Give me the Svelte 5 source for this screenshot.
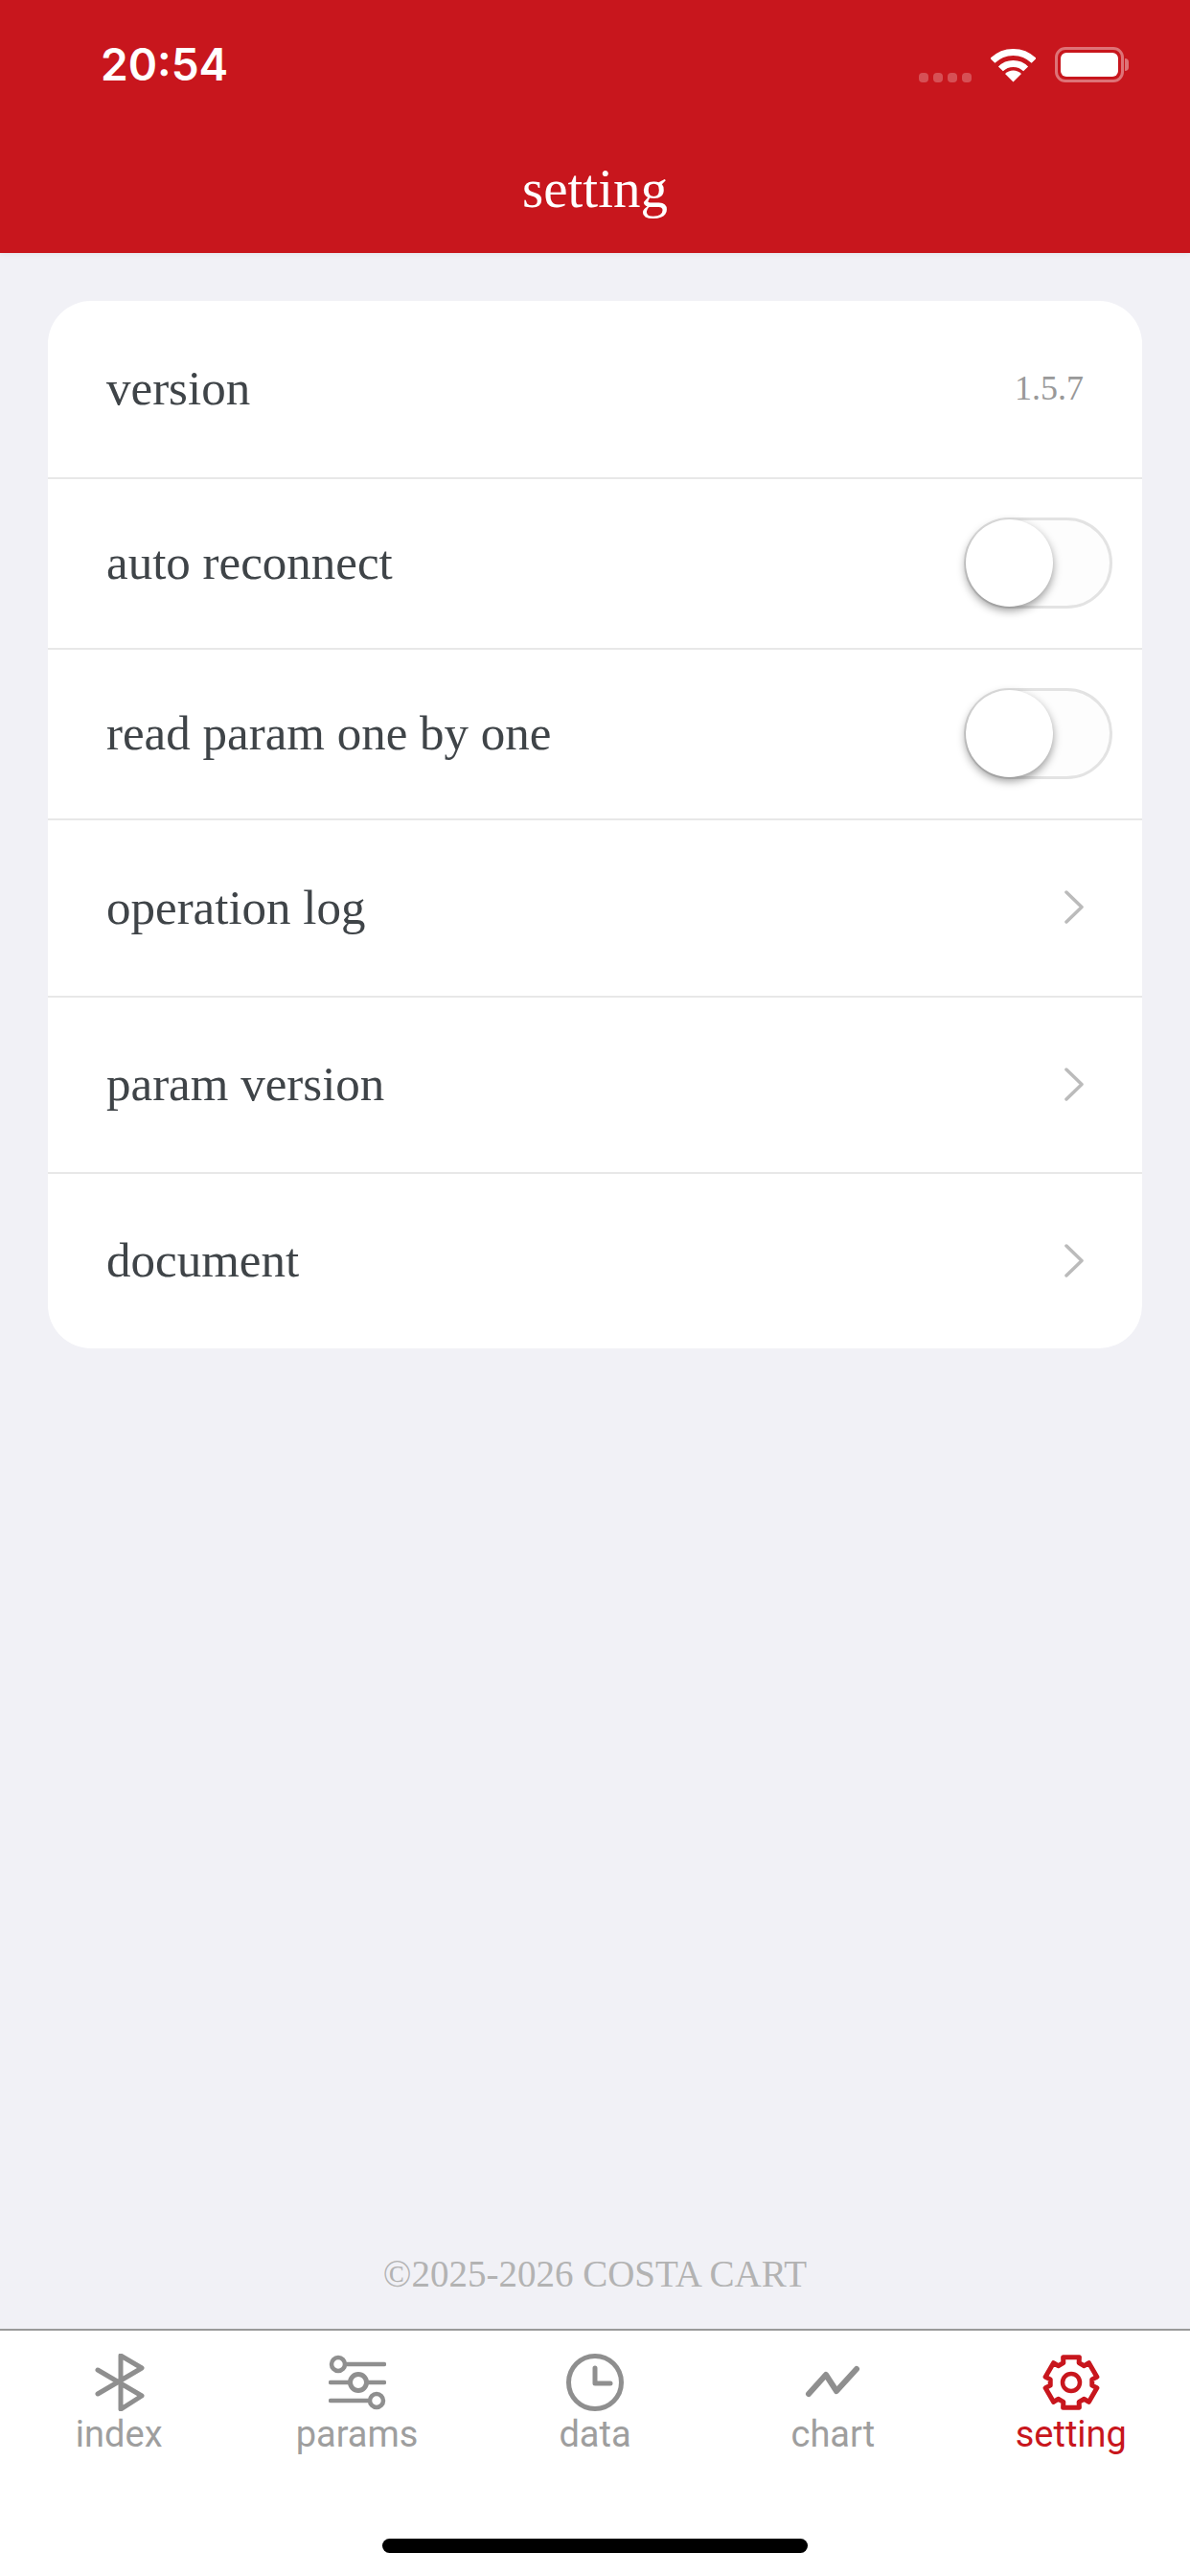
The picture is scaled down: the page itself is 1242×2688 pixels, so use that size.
<script>
  const rows = [
    { label: "version", kind: "value", value: "1.5.7" },
    { label: "auto reconnect", kind: "switch", short: true },
    { label: "read param one by one", kind: "switch", short: true },
    { label: "operation log", kind: "link" },
    { label: "param version", kind: "link" },
    { label: "document", kind: "link" }
  ];

  const tabs = ["index", "params", "data", "chart", "setting"];

  // six flat teeth around the body of the gear
  function gearPath() {
    const pt = (r, a) =>
      `${(30 + r * Math.cos(a)).toFixed(2)} ${(30 + r * Math.sin(a)).toFixed(2)}`;
    const parts = [];
    for (let i = 0; i < 6; i++) {
      const a = -Math.PI / 2 + (i * Math.PI) / 3;
      parts.push(pt(22, a - 0.38), pt(27.5, a - 0.31), pt(27.5, a + 0.31), pt(22, a + 0.38));
    }
    return "M" + parts.join("L") + "Z";
  }
</script>

<div class="page">
  <header class="top">
    <div class="status">
      <span class="time">20:54</span>
      <div class="status-icons">
        <div class="dots"><i></i><i></i><i></i><i></i></div>
        <svg class="wifi" width="47" height="36" viewBox="0 0 47 36">
          <path d="M1.9 13.4A30.5 30.5 0 0 1 45.1 13.4" fill="none" stroke="#fff" stroke-width="7" />
          <path d="M10.4 21.9A18.5 18.5 0 0 1 36.6 21.9" fill="none" stroke="#fff" stroke-width="7" />
          <path d="M23.5 35.5L15 27A12 12 0 0 1 32 27Z" fill="#fff" />
        </svg>
        <div class="battery">
          <div class="shell"><div class="charge"></div></div>
          <div class="cap"></div>
        </div>
      </div>
    </div>
    <h1 class="title">setting</h1>
  </header>

  <main class="content">
    <section class="card">
      {#each rows as row}
        <div class="row" class:short={row.short}>
          <span class="label">{row.label}</span>
          {#if row.kind === "value"}
            <span class="value">{row.value}</span>
          {:else if row.kind === "switch"}
            <div class="switch"><div class="knob"></div></div>
          {:else}
            <svg class="chevron" width="20" height="35" viewBox="0 0 20 35">
              <path d="M2 2L18 17.5L2 33" fill="none" stroke="#bbb" stroke-width="3.5" stroke-linecap="round" stroke-linejoin="round" />
            </svg>
          {/if}
        </div>
      {/each}
    </section>
    <p class="copyright">©2025-2026 COSTA CART</p>
  </main>

  <nav class="tabbar">
    <div class="tabs">
      {#each tabs as tab}
        <div class="tab" class:active={tab === "setting"}>
          <svg width="60" height="60" viewBox="0 0 60 60" fill="none" stroke="currentColor" stroke-linecap="round" stroke-linejoin="round">
            {#if tab === "index"}
              <path d="M8 17L54 44L32 58V2L54 15L8 42" stroke-width="5" />
            {:else if tab === "params"}
              <g stroke-width="4.5">
                <circle cx="10" cy="11" r="7" />
                <path d="M18 11H58" />
                <path d="M2 30H22" />
                <circle cx="31" cy="30" r="8.5" stroke-width="5" />
                <path d="M41 30H58" />
                <path d="M2 49H42" />
                <circle cx="50" cy="49" r="7" />
              </g>
            {:else if tab === "data"}
              <circle cx="30" cy="30" r="27.5" stroke-width="5" />
              <path d="M30 15V31H46" stroke-width="5" />
            {:else if tab === "chart"}
              <path d="M5 42L23 22L34 39L55 16" stroke-width="6" />
            {:else}
              <path d={gearPath()} stroke-width="5" />
              <circle cx="30" cy="30" r="9" stroke-width="4.5" />
            {/if}
          </svg>
          <span class="tab-label">{tab}</span>
        </div>
      {/each}
    </div>
    <div class="home"></div>
  </nav>
</div>

<style>
  :global(body) {
    margin: 0;
    background: #f1f1f6;
  }

  .page {
    display: flex;
    flex-direction: column;
    width: 1242px;
    height: 2688px;
    overflow: hidden;
  }

  .top {
    height: 264px;
    flex-shrink: 0;
    background: #c8161d;
    color: #fff;
    box-shadow: 0 1px 6px rgba(0, 0, 0, 0.06);
  }

  .status {
    display: flex;
    justify-content: space-between;
    align-items: flex-end;
    height: 37px;
    padding: 49px 64px 0 105px;
  }

  .time {
    font-family: Inter, sans-serif;
    font-size: 46px;
    font-weight: 600;
    line-height: 37px;
  }

  .status-icons {
    display: flex;
    align-items: flex-end;
    gap: 20px;
  }

  .dots {
    display: flex;
    gap: 5px;
  }

  .dots i {
    width: 10px;
    height: 10px;
    border-radius: 4px;
    background: rgba(255, 255, 255, 0.25);
  }

  .battery {
    display: flex;
    align-items: center;
    gap: 1px;
  }

  .shell {
    box-sizing: border-box;
    width: 72px;
    height: 37px;
    padding: 3px;
    border: 3px solid rgba(255, 255, 255, 0.4);
    border-radius: 11px;
  }

  .charge {
    height: 100%;
    border-radius: 6px;
    background: #fff;
  }

  .cap {
    width: 4px;
    height: 13px;
    border-radius: 0 4px 4px 0;
    background: rgba(255, 255, 255, 0.4);
  }

  .title {
    margin: 78px 0 0;
    font-family: "Liberation Serif", serif;
    font-size: 57px;
    font-weight: 400;
    line-height: 66px;
    text-align: center;
  }

  .content {
    flex: 1;
    display: flex;
    flex-direction: column;
    justify-content: space-between;
    padding: 50px 50px 35px;
  }

  .card {
    background: #fff;
    border-radius: 45px;
  }

  .row {
    display: flex;
    align-items: center;
    justify-content: space-between;
    box-sizing: border-box;
    height: 184px;
    padding: 0 61px 2px;
    border-bottom: 2px solid #e8e8e8;
  }

  .row:first-child {
    height: 186px;
  }

  .row:nth-child(4) {
    height: 185px;
  }

  .row.short {
    height: 178px;
  }

  .row:last-child {
    height: 182px;
    border-bottom: none;
  }

  .label {
    font-family: "Liberation Serif", serif;
    font-size: 51px;
    color: #3f4448;
  }

  .value {
    font-family: "Liberation Serif", serif;
    font-size: 36px;
    color: #999;
  }

  .switch {
    position: relative;
    box-sizing: border-box;
    width: 155px;
    height: 95px;
    margin-right: -30px;
    border: 3px solid #e3e3e3;
    border-radius: 48px;
    background: #fdfdfd;
  }

  .knob {
    position: absolute;
    left: -1px;
    top: -1px;
    width: 91px;
    height: 91px;
    border-radius: 50%;
    background: #fff;
    box-shadow: 0 4px 10px rgba(0, 0, 0, 0.4);
  }

  .copyright {
    margin: 0;
    font-family: "Liberation Serif", serif;
    font-size: 39px;
    text-align: center;
    color: #b3b3b3;
  }

  .tabbar {
    height: 258px;
    flex-shrink: 0;
    box-sizing: border-box;
    border-top: 2px solid #999;
    background: #fff;
  }

  .tabs {
    display: grid;
    grid-template-columns: repeat(5, 1fr);
    padding-top: 24px;
  }

  .tab {
    display: flex;
    flex-direction: column;
    align-items: center;
    color: #8f8f8f;
  }

  .tab.active {
    color: #c8161d;
  }

  .tab-label {
    margin-top: 2px;
    font-family: Roboto, sans-serif;
    font-size: 38px;
    line-height: 44px;
    color: #9e9e9e;
  }

  .tab.active .tab-label {
    color: #c8161d;
  }

  .home {
    width: 444px;
    height: 15px;
    margin: 87px auto 0;
    border-radius: 8px;
    background: #000;
  }
</style>
